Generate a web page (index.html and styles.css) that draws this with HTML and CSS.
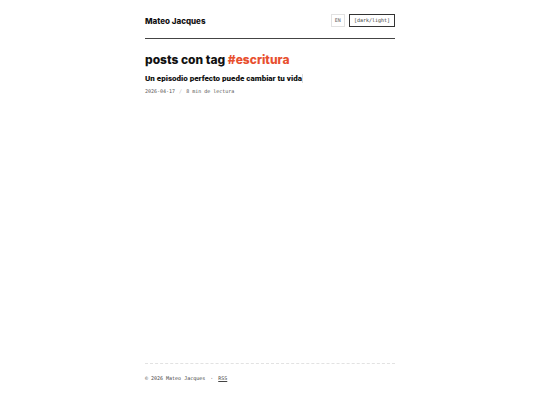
FILE: index.html
```html
<!DOCTYPE html>
<html lang="es">
<head>
  <meta charset="UTF-8" />
  <title>#escritura - Mateo Jacques</title>
  <meta name="viewport" content="width=device-width, initial-scale=1.0" />
  <link rel="stylesheet" href="styles.css">
</head>
<body>

<div class="container">
  <header class="site-header">
    <a class="site-name" href="#">Mateo Jacques</a>
    <div class="controls">
      <a class="lang" href="#">EN</a>
      <button class="theme" type="button">[dark/light]</button>
    </div>
  </header>

  <main>
    <h1>posts con tag <span class="tag">#escritura</span></h1>
    <article class="post">
      <h2><a href="#">Un episodio perfecto puede cambiar tu vida</a></h2>
      <p class="meta">
        <time datetime="2026-04-17">2026-04-17</time>
        <span class="slash">/</span>
        <span>8 min de lectura</span>
      </p>
    </article>
  </main>

  <footer class="site-footer">
    <span>© 2026 Mateo Jacques</span>
    <span>·</span>
    <a href="#">RSS</a>
  </footer>
</div>

</body>
</html>
```
FILE: styles.css
```css
* {
  box-sizing: border-box;
}

body {
  margin: 0;
  background: #fff;
  color: #111;
  font-family: Inter, "Liberation Sans", sans-serif;
}

a {
  color: inherit;
  text-decoration: none;
}

.container {
  display: flex;
  flex-direction: column;
  max-width: 250px;
  min-height: 100vh;
  margin: 0 auto;
}

.site-header {
  display: flex;
  justify-content: space-between;
  align-items: center;
  padding: 14px 0 11px;
  border-bottom: 1px solid #444;
}

.site-name {
  font-size: 8px;
  font-weight: 800;
}

.controls {
  display: flex;
  gap: 4px;
}

.lang, .theme {
  padding: 2px 3px;
  border: 1px solid #e2e2e2;
  font-family: "DejaVu Sans Mono", monospace;
  font-size: 5px;
  line-height: 7px;
  color: #666;
}

.theme {
  padding: 2px 4px;
  border-color: #333;
  border-radius: 0;
  background: #fff;
  color: #333;
  cursor: pointer;
}

main {
  flex: 1;
  padding-top: 14px;
}

h1, h2, p {
  margin: 0;
}

h1 {
  font-size: 12px;
  line-height: 14px;
  font-weight: 800;
}

.tag {
  color: #e8502f;
}

h2 {
  margin-top: 7px;
  font-family: Roboto, "Liberation Sans", sans-serif;
  font-size: 8px;
  line-height: 10px;
  font-weight: 900;
}

h2 a {
  border-right: 1px solid #ddd;
}

.meta {
  display: flex;
  gap: 4px;
  margin-top: 4px;
  font-family: "DejaVu Sans Mono", monospace;
  font-size: 5px;
  line-height: 7px;
  color: #555;
}

.slash {
  color: #bbb;
}

.site-footer {
  display: flex;
  gap: 5px;
  padding: 11px 0 23px;
  border-top: 1px dashed #e2e2e2;
  font-family: "DejaVu Sans Mono", monospace;
  font-size: 5px;
  line-height: 7px;
  color: #444;
}

.site-footer a {
  text-decoration: underline;
}
```
